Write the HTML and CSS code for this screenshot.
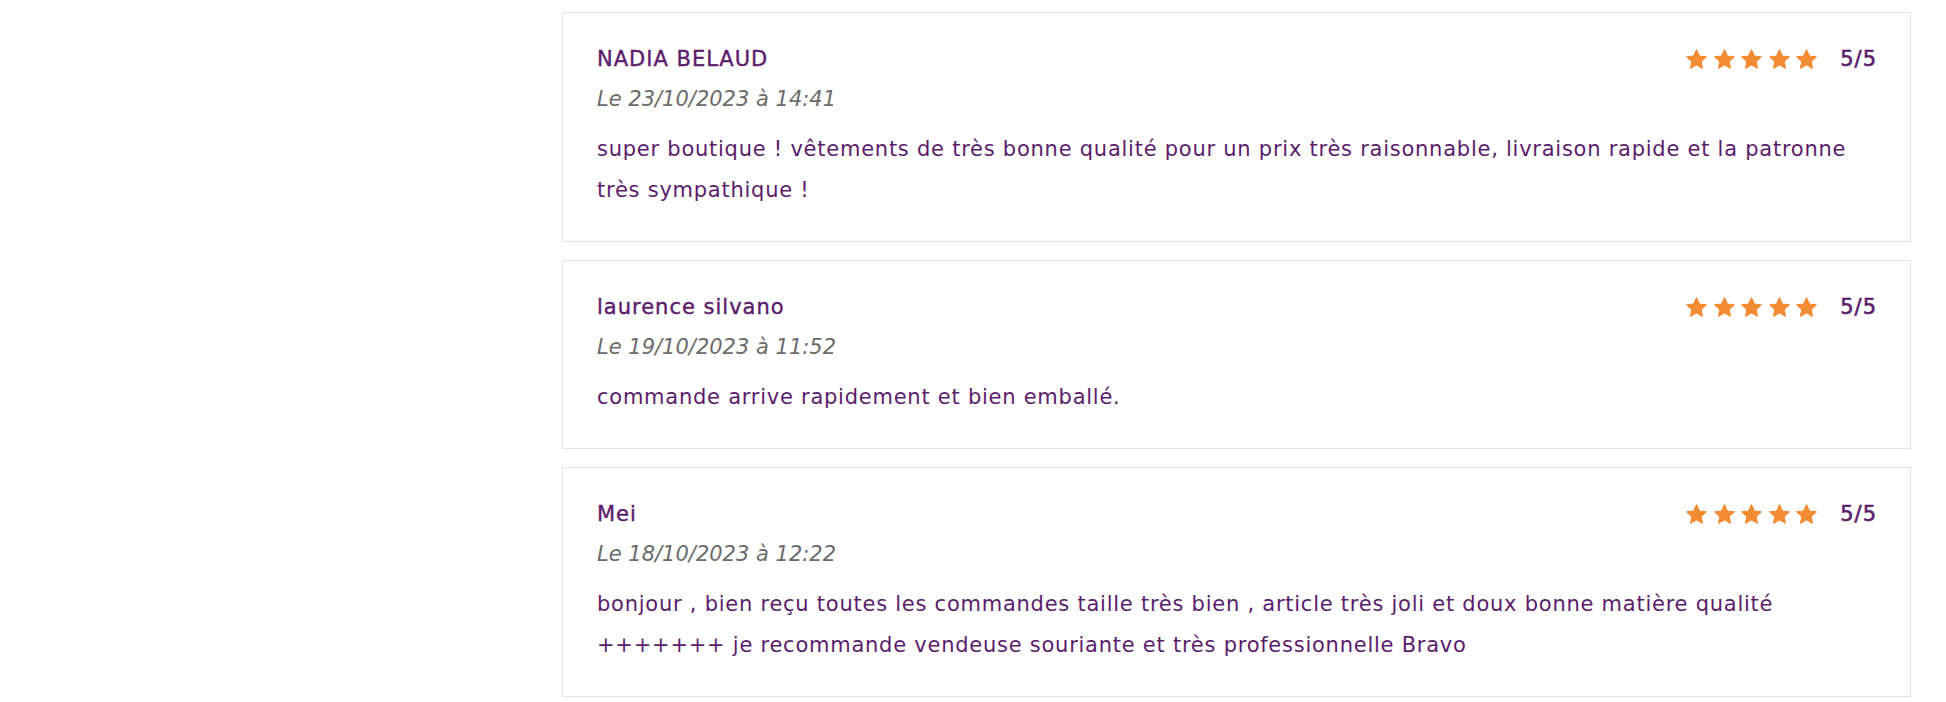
FILE: index.html
```html
<!DOCTYPE html>
<html lang="fr">
<head>
  <meta charset="UTF-8">
  <meta name="viewport" content="width=device-width, initial-scale=1.0">
  <title>Avis clients</title>
  <link rel="stylesheet" href="styles.css">
</head>
<body>
  <div class="page">
    <aside class="sidebar"></aside>

    <section class="reviews">
      <article class="review">
        <div class="review-head">
          <h3 class="review-author">NADIA BELAUD</h3>
          <div class="review-rating">
            <span class="stars">
              <svg class="star" viewBox="0 0 24 24"><path d="M12 2.6l2.8 6 6.6.8-4.9 4.5 1.3 6.5L12 17.2l-5.8 3.2 1.3-6.5-4.9-4.5 6.6-.8z"/></svg>
              <svg class="star" viewBox="0 0 24 24"><path d="M12 2.6l2.8 6 6.6.8-4.9 4.5 1.3 6.5L12 17.2l-5.8 3.2 1.3-6.5-4.9-4.5 6.6-.8z"/></svg>
              <svg class="star" viewBox="0 0 24 24"><path d="M12 2.6l2.8 6 6.6.8-4.9 4.5 1.3 6.5L12 17.2l-5.8 3.2 1.3-6.5-4.9-4.5 6.6-.8z"/></svg>
              <svg class="star" viewBox="0 0 24 24"><path d="M12 2.6l2.8 6 6.6.8-4.9 4.5 1.3 6.5L12 17.2l-5.8 3.2 1.3-6.5-4.9-4.5 6.6-.8z"/></svg>
              <svg class="star" viewBox="0 0 24 24"><path d="M12 2.6l2.8 6 6.6.8-4.9 4.5 1.3 6.5L12 17.2l-5.8 3.2 1.3-6.5-4.9-4.5 6.6-.8z"/></svg>
            </span>
            <span class="score">5/5</span>
          </div>
        </div>
        <p class="review-date">Le 23/10/2023 à 14:41</p>
        <p class="review-text">super boutique ! vêtements de très bonne qualité pour un prix très raisonnable, livraison rapide et la patronne très sympathique !</p>
      </article>

      <article class="review">
        <div class="review-head">
          <h3 class="review-author">laurence silvano</h3>
          <div class="review-rating">
            <span class="stars">
              <svg class="star" viewBox="0 0 24 24"><path d="M12 2.6l2.8 6 6.6.8-4.9 4.5 1.3 6.5L12 17.2l-5.8 3.2 1.3-6.5-4.9-4.5 6.6-.8z"/></svg>
              <svg class="star" viewBox="0 0 24 24"><path d="M12 2.6l2.8 6 6.6.8-4.9 4.5 1.3 6.5L12 17.2l-5.8 3.2 1.3-6.5-4.9-4.5 6.6-.8z"/></svg>
              <svg class="star" viewBox="0 0 24 24"><path d="M12 2.6l2.8 6 6.6.8-4.9 4.5 1.3 6.5L12 17.2l-5.8 3.2 1.3-6.5-4.9-4.5 6.6-.8z"/></svg>
              <svg class="star" viewBox="0 0 24 24"><path d="M12 2.6l2.8 6 6.6.8-4.9 4.5 1.3 6.5L12 17.2l-5.8 3.2 1.3-6.5-4.9-4.5 6.6-.8z"/></svg>
              <svg class="star" viewBox="0 0 24 24"><path d="M12 2.6l2.8 6 6.6.8-4.9 4.5 1.3 6.5L12 17.2l-5.8 3.2 1.3-6.5-4.9-4.5 6.6-.8z"/></svg>
            </span>
            <span class="score">5/5</span>
          </div>
        </div>
        <p class="review-date">Le 19/10/2023 à 11:52</p>
        <p class="review-text">commande arrive rapidement et bien emballé.</p>
      </article>

      <article class="review">
        <div class="review-head">
          <h3 class="review-author">Mei</h3>
          <div class="review-rating">
            <span class="stars">
              <svg class="star" viewBox="0 0 24 24"><path d="M12 2.6l2.8 6 6.6.8-4.9 4.5 1.3 6.5L12 17.2l-5.8 3.2 1.3-6.5-4.9-4.5 6.6-.8z"/></svg>
              <svg class="star" viewBox="0 0 24 24"><path d="M12 2.6l2.8 6 6.6.8-4.9 4.5 1.3 6.5L12 17.2l-5.8 3.2 1.3-6.5-4.9-4.5 6.6-.8z"/></svg>
              <svg class="star" viewBox="0 0 24 24"><path d="M12 2.6l2.8 6 6.6.8-4.9 4.5 1.3 6.5L12 17.2l-5.8 3.2 1.3-6.5-4.9-4.5 6.6-.8z"/></svg>
              <svg class="star" viewBox="0 0 24 24"><path d="M12 2.6l2.8 6 6.6.8-4.9 4.5 1.3 6.5L12 17.2l-5.8 3.2 1.3-6.5-4.9-4.5 6.6-.8z"/></svg>
              <svg class="star" viewBox="0 0 24 24"><path d="M12 2.6l2.8 6 6.6.8-4.9 4.5 1.3 6.5L12 17.2l-5.8 3.2 1.3-6.5-4.9-4.5 6.6-.8z"/></svg>
            </span>
            <span class="score">5/5</span>
          </div>
        </div>
        <p class="review-date">Le 18/10/2023 à 12:22</p>
        <p class="review-text">bonjour , bien reçu toutes les commandes taille très bien , article très joli et doux bonne matière qualité +++++++ je recommande vendeuse souriante et très professionnelle Bravo</p>
      </article>
    </section>
  </div>
</body>
</html>
```

FILE: styles.css
```css
body {
  margin: 0;
  background: #fff;
  font-family: "DejaVu Sans", Inter, sans-serif;
  color: #5b1d6b;
}

.page {
  display: grid;
  grid-template-columns: 562px 1fr;
  padding: 12px 35px 0 0;
}

.reviews {
  display: flex;
  flex-direction: column;
  gap: 18px;
}

.review {
  border: 1px solid #e1e3e6;
  padding: 31px 33px 30px 34px;
}

.review-head {
  display: flex;
  justify-content: space-between;
  align-items: center;
}

.review-author {
  margin: 0;
  font-size: 21px;
  font-weight: normal;
  line-height: 30px;
  letter-spacing: 1px;
  -webkit-text-stroke: 0.4px currentColor;
}

.review-rating {
  display: flex;
  align-items: center;
  gap: 21px;
}

.stars {
  display: flex;
  gap: 2.5px;
}

.star {
  width: 25px;
  height: 25px;
  fill: #f28c33;
  stroke: #f28c33;
  stroke-width: 1;
  stroke-linejoin: round;
}

.score {
  font-size: 21px;
  line-height: 30px;
  letter-spacing: 1px;
  -webkit-text-stroke: 0.6px currentColor;
}

.review-date {
  margin: 10px 0 0;
  font-size: 21px;
  font-style: italic;
  line-height: 30px;
  color: #6b6b6b;
}

.review-text {
  margin: 15px 0 0;
  font-size: 21px;
  line-height: 41px;
  letter-spacing: 0.75px;
}
```
